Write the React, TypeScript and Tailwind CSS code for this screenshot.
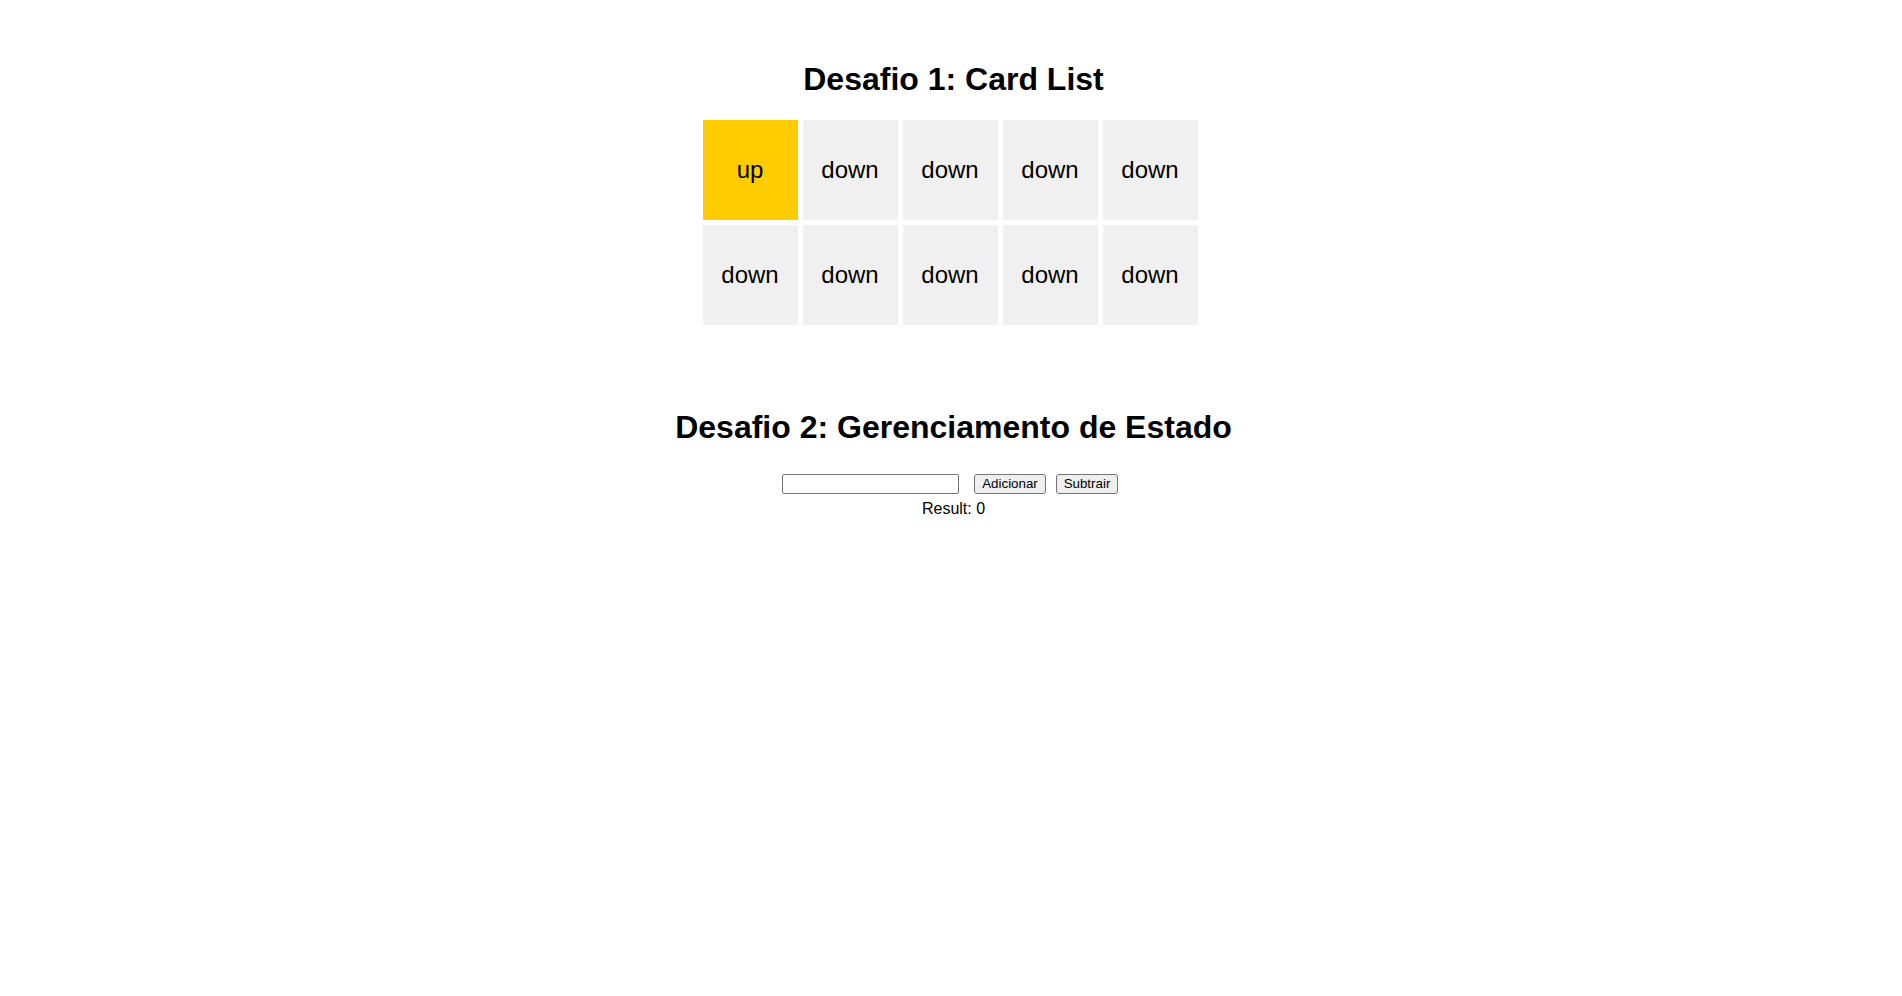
import React, { useState } from "react";

const cards = ["up", "down", "down", "down", "down", "down", "down", "down", "down", "down"];

export default function App() {
  const [value, setValue] = useState("");
  const [result, setResult] = useState(0);

  return (
    <div className="min-h-screen bg-white text-black font-['Liberation_Sans',Arial,sans-serif] pt-[61px]">
      <h1 className="text-center text-[32px] leading-[37px] font-bold mb-[22px] pl-[5px]">Desafio 1: Card List</h1>
      <div className="flex justify-center pr-[2px]">
        <div className="grid grid-cols-[repeat(5,95px)] auto-rows-[100px] gap-[5px]">
          {cards.map((c, i) => (
            <div
              key={i}
              className={
                c === "up"
                  ? "flex items-center justify-center bg-[#ffcc00] text-[24px]"
                  : "flex items-center justify-center bg-[#f0f0f0] text-[24px]"
              }
            >
              {c}
            </div>
          ))}
        </div>
      </div>

      <h2 className="text-center text-[32px] leading-[37px] font-bold mt-[84px] mb-[28px] pl-[5px]">
        Desafio 2: Gerenciamento de Estado
      </h2>
      <div className="flex justify-center items-center h-[20px] pr-[2px]">
        <input
          type="text"
          value={value}
          onChange={(e) => setValue(e.target.value)}
          className="w-[177px] h-[20px] border border-[#767676] rounded-[2px] px-[2px] text-[13.33px] outline-none"
        />
        <button
          onClick={() => setResult(result + (Number(value) || 0))}
          className="ml-[15px] w-[72px] h-[20px] bg-[#efefef] border border-[#767676] rounded-[3px] text-[13.33px] leading-[16px] text-black"
        >
          Adicionar
        </button>
        <button
          onClick={() => setResult(result - (Number(value) || 0))}
          className="ml-[10px] w-[62px] h-[20px] bg-[#efefef] border border-[#767676] rounded-[3px] text-[13.33px] leading-[16px] text-black"
        >
          Subtrair
        </button>
      </div>
      <div className="text-center text-[16px] leading-[18px] mt-[6px] pl-[5px]">Result: {result}</div>
    </div>
  );
}
